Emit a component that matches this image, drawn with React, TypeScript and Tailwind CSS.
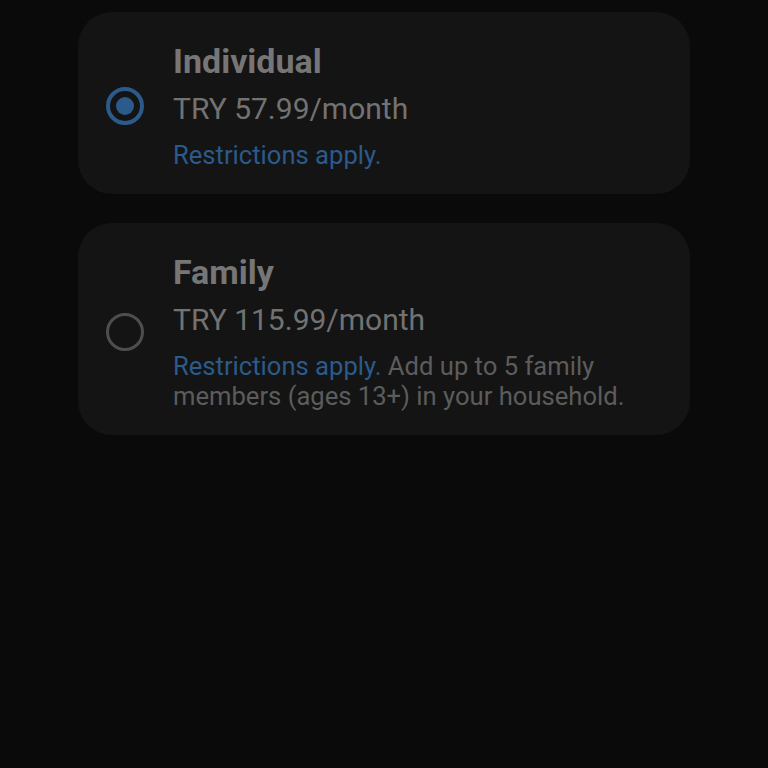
import React, {FC} from 'react';

interface IPlanCardProps {
  title: string;
  price: string;
  note?: string;
  selected?: boolean;
}

const Radio: FC<{selected?: boolean}> = ({selected}) =>
  selected ? (
    <div className="flex h-[38px] w-[38px] shrink-0 items-center justify-center rounded-full border-[4px] border-[#2b5a8b]">
      <div className="h-[18px] w-[18px] rounded-full bg-[#2b5a8b]" />
    </div>
  ) : (
    <div className="h-[38px] w-[38px] shrink-0 rounded-full border-[3px] border-[#4e4e4e]" />
  );

const PlanCard: FC<IPlanCardProps> = ({title, price, note, selected}) => {
  return (
    <div className="flex w-[612px] items-center rounded-[34px] bg-[#141414] pb-[24px] pl-[28px] pr-[40px] pt-[29px]">
      <Radio selected={selected} />
      <div className="ml-[29px] flex flex-col">
        <p className="text-[34px] font-bold leading-[40px] text-[#767676]">{title}</p>
        <p className="mt-[8px] text-[30px] leading-[40px] text-[#727272]">{price}</p>
        <p className="mt-[11px] text-[25.6px] leading-[30px] text-[#5c5c5c]">
          <span className="text-[#2b5a8b]">Restrictions apply.</span>
          {note ? ` ${note}` : ''}
        </p>
      </div>
    </div>
  );
};

export default function App() {
  return (
    <div className="flex h-[768px] w-[768px] flex-col items-center gap-[29px] bg-[#0a0a0a] pt-[12px] font-['Roboto',sans-serif]">
      <PlanCard title="Individual" price="TRY 57.99/month" selected />
      <PlanCard
        title="Family"
        price="TRY 115.99/month"
        note="Add up to 5 family members (ages 13+) in your household."
      />
    </div>
  );
}
